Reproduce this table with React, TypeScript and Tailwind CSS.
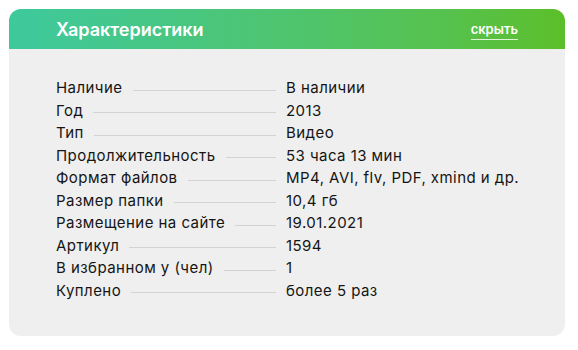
const rows: [string, string][] = [
  ["Наличие", "В наличии"],
  ["Год", "2013"],
  ["Тип", "Видео"],
  ["Продолжительность", "53 часа 13 мин"],
  ["Формат файлов", "MP4, AVI, flv, PDF, xmind и др."],
  ["Размер папки", "10,4 гб"],
  ["Размещение на сайте", "19.01.2021"],
  ["Артикул", "1594"],
  ["В избранном у (чел)", "1"],
  ["Куплено", "более 5 раз"],
];

export default function App() {
  return (
    <div className="min-h-[350px] bg-white pt-[9px] pl-[9px] font-['Inter',sans-serif]">
      <div className="w-[556px] h-[327px] rounded-[12px] bg-[#efefef] overflow-hidden">
        <div className="h-[40px] flex items-center justify-between px-[47px] bg-linear-to-r from-[#3ec99d] to-[#5cbf28]">
          <div className="text-white text-[18px] font-semibold">Характеристики</div>
          <a className="text-white text-[13px] font-semibold leading-[15px] pb-[2px] mt-[4px] border-b border-white/80">
            скрыть
          </a>
        </div>
        <div className="pt-[28px] pl-[47px]">
          {rows.map(([label, value]) => (
            <div
              key={label}
              className="flex items-end text-[15px] leading-[22.5px] tracking-[0.45px] text-[#151515]"
            >
              <div className="w-[230px] flex items-end pr-[10px]">
                <span className="whitespace-nowrap">{label}</span>
                <span className="flex-1 ml-[10px] mb-[9px] border-b border-[#d3d3d3]" />
              </div>
              <div>{value}</div>
            </div>
          ))}
        </div>
      </div>
    </div>
  );
}
